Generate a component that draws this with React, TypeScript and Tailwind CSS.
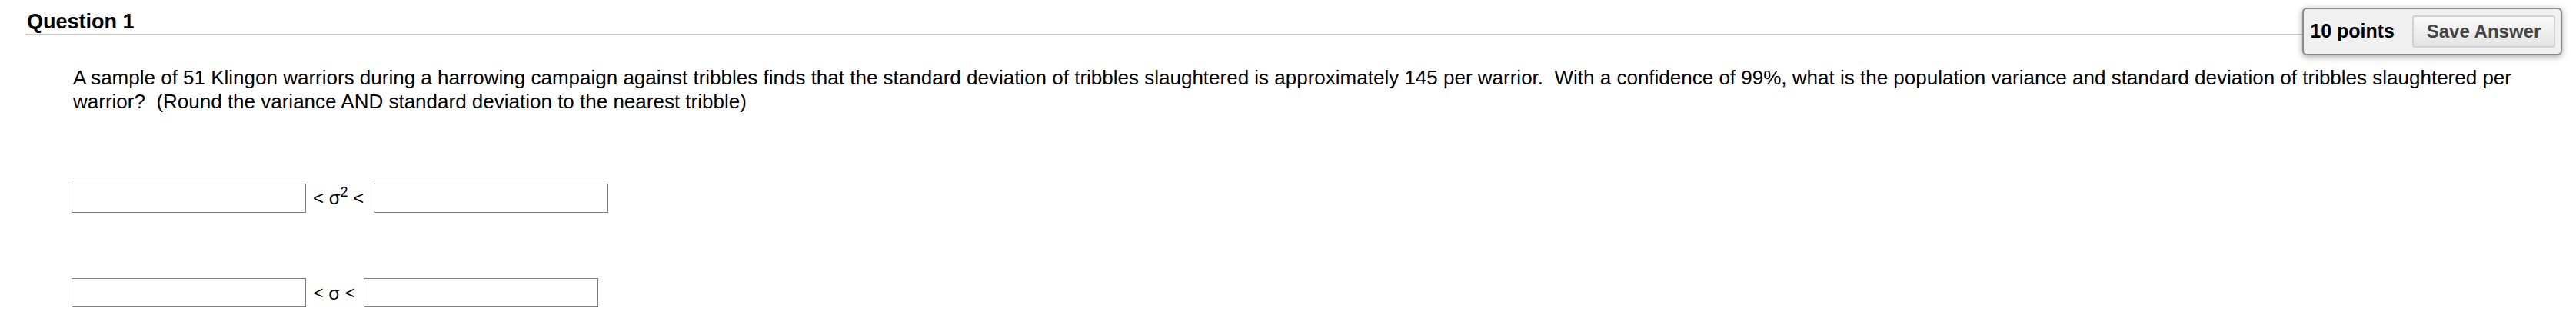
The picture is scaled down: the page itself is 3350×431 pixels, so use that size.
import React, { useState } from 'react';

function App() {
  const [varLow, setVarLow] = useState<string>('');
  const [varHigh, setVarHigh] = useState<string>('');
  const [sdLow, setSdLow] = useState<string>('');
  const [sdHigh, setSdHigh] = useState<string>('');

  const inputClass =
    'w-[305px] h-[38px] border border-[#808080] bg-white px-2 text-[22px] outline-none';

  return (
    <div className="min-h-screen bg-white text-black font-['Liberation_Sans',Arial,sans-serif]">
      {/* header */}
      <div className="flex items-start pl-[33px] pr-[18px]">
        <h2 className="flex-1 h-[46px] pt-[15px] pb-[2px] border-b-2 border-[#c8c8c8] pl-[2px] text-[27px] leading-[27px] font-bold">
          Question 1
        </h2>
        <div className="mt-[10px] h-[62px] flex items-center rounded-md border-2 border-[#8a8a8a] bg-[#f0f0f0] pl-[8px] pr-[7px] shadow-[0_2px_8px_rgba(0,0,0,0.35)]">
          <span className="text-[25px] font-bold mr-[23px]">10 points</span>
          <button className="w-[186px] h-[42px] rounded-[3px] border-2 border-[#d2d2d2] bg-gradient-to-b from-[#fafafa] to-[#e4e4e4] text-[24px] font-bold text-[#454545]">
            Save Answer
          </button>
        </div>
      </div>

      {/* question text */}
      <p className="mt-[14px] pl-[95px] pr-[20px] text-[26px] leading-[31px]">
        A sample of 51 Klingon warriors during a harrowing campaign against tribbles finds that the standard deviation of tribbles slaughtered is approximately 145 per warrior.{'\u00a0'} With a confidence of 99%, what is the population variance and standard deviation of tribbles slaughtered per warrior?{'\u00a0'} (Round the variance AND standard deviation to the nearest tribble)
      </p>

      {/* variance row */}
      <div className="mt-[91px] pl-[93px] flex items-center">
        <input className={inputClass} value={varLow} onChange={(e) => setVarLow(e.target.value)} />
        <span className="ml-[9px] mr-[13px] text-[24px] leading-none whitespace-nowrap">
          &lt; σ<sup className="text-[18px] relative -top-[10px]">2</sup> &lt;
        </span>
        <input className={inputClass} value={varHigh} onChange={(e) => setVarHigh(e.target.value)} />
      </div>

      {/* standard deviation row */}
      <div className="mt-[85px] pl-[93px] flex items-center">
        <input className={inputClass} value={sdLow} onChange={(e) => setSdLow(e.target.value)} />
        <span className="ml-[9px] mr-[11px] text-[24px] leading-none whitespace-nowrap font-['Open_Sans',sans-serif]">
          &lt; σ &lt;
        </span>
        <input className={inputClass} value={sdHigh} onChange={(e) => setSdHigh(e.target.value)} />
      </div>
    </div>
  );
}

export default App;
